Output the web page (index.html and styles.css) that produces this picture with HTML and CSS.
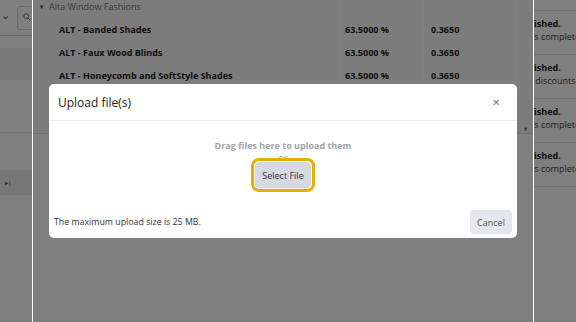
FILE: index.html
```html
<html>
    <head>
        <link rel="stylesheet" href="styles.css">
    </head>
    <body>
        <div class="page">
            <aside class="sidebar">
                <div class="toolbar">
                    <span class="chevron">&#8964;</span>
                    <div class="search">
                        <svg width="8" height="8" viewBox="0 0 8 8"><circle cx="3.2" cy="3.2" r="2.4" fill="none" stroke="#777" stroke-width="1"/><line x1="5" y1="5" x2="7.5" y2="7.5" stroke="#777" stroke-width="1"/></svg>
                    </div>
                </div>
                <div class="side-row"></div>
                <div class="side-split"></div>
                <div class="side-pager">&#9656;|</div>
            </aside>
            <main class="grid">
                <div class="row group">
                    <div class="cell name"><span class="tri">&#9662;</span>Alta Window Fashions</div>
                    <div class="cell pct"></div>
                    <div class="cell num"></div>
                    <div class="cell tail"></div>
                </div>
                <div class="row">
                    <div class="cell name">ALT - Banded Shades</div>
                    <div class="cell pct">63.5000 %</div>
                    <div class="cell num">0.3650</div>
                    <div class="cell tail"></div>
                </div>
                <div class="row">
                    <div class="cell name">ALT - Faux Wood Blinds</div>
                    <div class="cell pct">63.5000 %</div>
                    <div class="cell num">0.3650</div>
                    <div class="cell tail"></div>
                </div>
                <div class="row">
                    <div class="cell name">ALT - Honeycomb and SoftStyle Shades</div>
                    <div class="cell pct">63.5000 %</div>
                    <div class="cell num">0.3650</div>
                    <div class="cell tail"></div>
                </div>
                <div class="row">
                    <div class="cell name"></div>
                    <div class="cell pct"></div>
                    <div class="cell num"></div>
                    <div class="cell tail"></div>
                </div>
                <div class="row last">
                    <div class="cell name"></div>
                    <div class="cell pct"></div>
                    <div class="cell num"></div>
                    <div class="cell tail"><span class="caret">&#9662;</span></div>
                </div>
            </main>
            <aside class="activity">
                <div class="item">
                    <div class="item-title">Published.</div>
                    <div class="item-note">Import is complete.</div>
                </div>
                <div class="item">
                    <div class="item-title">Published.</div>
                    <div class="item-note">Applied discounts saved.</div>
                </div>
                <div class="item">
                    <div class="item-title">Published.</div>
                    <div class="item-note">Import is complete.</div>
                </div>
                <div class="item">
                    <div class="item-title">Published.</div>
                    <div class="item-note">Import is complete.</div>
                </div>
                <div class="item"></div>
            </aside>
        </div>

        <div class="backdrop">
            <div class="edge-left"></div>
            <div class="stage">
                <div class="modal">
                    <div class="modal-header">
                        <span class="modal-title">Upload file(s)</span>
                        <span class="close">&times;</span>
                    </div>
                    <div class="modal-body">
                        <p class="drop-hint">Drag files here to upload them</p>
                        <p class="or">or</p>
                        <button type="button" class="select-btn">Select File</button>
                    </div>
                    <div class="modal-footer">
                        <span class="limit">The maximum upload size is 25 MB.</span>
                        <button type="button" class="cancel-btn">Cancel</button>
                    </div>
                </div>
            </div>
            <div class="edge-right"></div>
        </div>
    </body>
</html>
```

FILE: styles.css
```css
body{
    margin: 0;
    width: 576px;
    height: 322px;
    overflow: hidden;
    background: #fff;
    font-family: "Open Sans", "Noto Sans", sans-serif;
    font-size: 9px;
    color: #222;
}
.page{
    display: flex;
    height: 322px;
}
.sidebar{
    width: 32px;
    border-right: 1px solid #fff;
    display: flex;
    flex-direction: column;
    overflow: hidden;
}
.toolbar{
    height: 35px;
    border-bottom: 1px solid #c7cfe6;
    display: flex;
    align-items: center;
    gap: 7px;
}
.chevron{
    font-size: 11px;
    color: #555;
    margin-left: 1px;
    margin-top: -6px;
}
.search{
    width: 26px;
    height: 24px;
    border: 1px solid #d8d8d8;
    border-radius: 3px;
    flex-shrink: 0;
    padding: 6px 0 0 5px;
    box-sizing: border-box;
}
.side-row{
    height: 32px;
    margin-top: 12px;
    background: #f1f1f1;
}
.side-split{
    height: 52px;
    border-bottom: 1px solid #e3e3e3;
}
.side-pager{
    margin-top: 37px;
    height: 25px;
    background: #ececec;
    font-size: 6px;
    color: #444;
    line-height: 26px;
    padding-left: 5px;
}
.grid{
    width: 500px;
    margin-top: -5px;
    align-self: flex-start;
    border-bottom: 1px solid #e3e3e3;
    background: #f8f8f8;
}
.row{
    display: flex;
    height: 23px;
    font-weight: bold;
}
.row.group{
    font-weight: normal;
    color: #7a7a7a;
}
.cell{
    display: flex;
    align-items: center;
    white-space: nowrap;
    border-right: 1px solid #fff;
    box-sizing: border-box;
}
.name{
    width: 307px;
    padding-left: 26px;
}
.group .name{
    padding-left: 7px;
}
.tri{
    font-size: 7px;
    margin-right: 5px;
    color: #444;
}
.pct{
    width: 84px;
    padding-left: 5px;
}
.num{
    width: 92px;
    padding-left: 7px;
}
.tail{
    flex: 1;
    border-right: none;
    align-items: flex-end;
}
.caret{
    font-size: 6px;
    color: #666;
    padding-left: 8px;
}
.activity{
    width: 42px;
    border-left: 1px solid #fff;
    overflow: hidden;
    padding-top: 10px;
}
.item{
    height: 44px;
    border-top: 1px solid #dcdcdc;
    box-sizing: border-box;
    padding-top: 6px;
    white-space: nowrap;
    line-height: 13px;
}
.item-title{
    margin-left: -20px;
    font-weight: bold;
    color: #222;
}
.item-note{
    margin-left: -33px;
    color: #444;
}

/* dialog */
.backdrop{
    position: fixed;
    top: 0;
    left: 0;
    right: 0;
    bottom: 0;
    display: flex;
    background: rgba(0, 0, 0, 0.5);
}
.edge-left{
    width: 32px;
    border-right: 1px solid #fff;
}
.stage{
    width: 500px;
    padding: 84px 16px 0 16px;
    box-sizing: border-box;
}
.edge-right{
    flex: 1;
    border-left: 1px solid #fff;
}
.modal{
    background: #fff;
    border-radius: 5px;
    height: 154px;
    display: flex;
    flex-direction: column;
}
.modal-header{
    height: 36px;
    border-bottom: 1px solid #ececec;
    display: flex;
    align-items: center;
    justify-content: space-between;
    padding: 0 17px 0 9px;
}
.modal-title{
    font-size: 12px;
    color: #222;
}
.close{
    font-size: 13px;
    color: #666;
}
.modal-body{
    display: flex;
    flex-direction: column;
    align-items: center;
    padding-top: 18px;
    height: 89px;
    box-sizing: border-box;
}
.drop-hint{
    margin: 0;
    font-weight: bold;
    color: #a3a3a3;
    line-height: 14px;
}
.or{
    margin: 0;
    color: #a3a3a3;
    line-height: 10px;
}
.select-btn{
    margin-top: -1px;
    width: 56px;
    height: 26px;
    border: none;
    border-radius: 4px;
    background: #d6d9e0;
    font-family: inherit;
    font-size: 9px;
    color: #333;
    outline: 3px solid #e6b000;
    outline-offset: 1px;
}
.modal-footer{
    flex: 1;
    display: flex;
    align-items: center;
    justify-content: space-between;
    padding: 0 5px 4px 5px;
}
.limit{
    font-size: 8.8px;
    color: #333;
}
.cancel-btn{
    width: 42px;
    height: 24px;
    border: none;
    border-radius: 4px;
    background: #e4e7ec;
    font-family: inherit;
    font-size: 9px;
    color: #555;
}
```
